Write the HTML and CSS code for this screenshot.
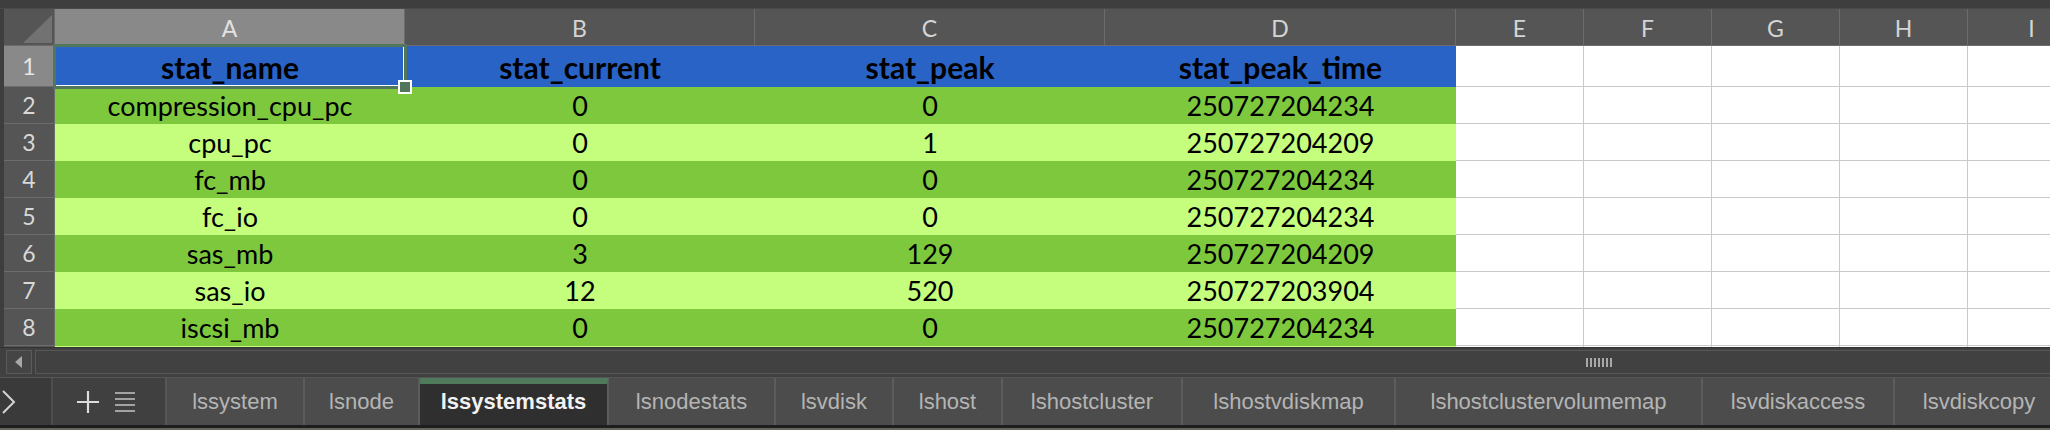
FILE: index.html
```html
<!DOCTYPE html>
<html>
<head>
<meta charset="utf-8">
<link rel="stylesheet" href="styles.css">
</head>
<body>
<div class="app">
  <div class="topbar"></div>
  <div class="sheet">
    <div class="corner"><svg width="51" height="36" viewBox="0 0 51 36"><polygon points="19,34 48,34 48,6" fill="#727272"/></svg></div>
    <div class="ch sel">A</div>
    <div class="ch">B</div>
    <div class="ch">C</div>
    <div class="ch">D</div>
    <div class="ch">E</div>
    <div class="ch">F</div>
    <div class="ch">G</div>
    <div class="ch">H</div>
    <div class="ch">I</div>

    <div class="rh sel">1</div>
    <div class="c hd">stat_name</div><div class="c hd">stat_current</div><div class="c hd">stat_peak</div><div class="c hd">stat_peak_time</div>
    <div class="w"></div><div class="w"></div><div class="w"></div><div class="w"></div><div class="w"></div>

    <div class="rh">2</div>
    <div class="c dk">compression_cpu_pc</div><div class="c dk">0</div><div class="c dk">0</div><div class="c dk">250727204234</div>
    <div class="w"></div><div class="w"></div><div class="w"></div><div class="w"></div><div class="w"></div>

    <div class="rh">3</div>
    <div class="c lt">cpu_pc</div><div class="c lt">0</div><div class="c lt">1</div><div class="c lt">250727204209</div>
    <div class="w"></div><div class="w"></div><div class="w"></div><div class="w"></div><div class="w"></div>

    <div class="rh">4</div>
    <div class="c dk">fc_mb</div><div class="c dk">0</div><div class="c dk">0</div><div class="c dk">250727204234</div>
    <div class="w"></div><div class="w"></div><div class="w"></div><div class="w"></div><div class="w"></div>

    <div class="rh">5</div>
    <div class="c lt">fc_io</div><div class="c lt">0</div><div class="c lt">0</div><div class="c lt">250727204234</div>
    <div class="w"></div><div class="w"></div><div class="w"></div><div class="w"></div><div class="w"></div>

    <div class="rh">6</div>
    <div class="c dk">sas_mb</div><div class="c dk">3</div><div class="c dk">129</div><div class="c dk">250727204209</div>
    <div class="w"></div><div class="w"></div><div class="w"></div><div class="w"></div><div class="w"></div>

    <div class="rh">7</div>
    <div class="c lt">sas_io</div><div class="c lt">12</div><div class="c lt">520</div><div class="c lt">250727203904</div>
    <div class="w"></div><div class="w"></div><div class="w"></div><div class="w"></div><div class="w"></div>

    <div class="rh">8</div>
    <div class="c dk">iscsi_mb</div><div class="c dk">0</div><div class="c dk">0</div><div class="c dk">250727204234</div>
    <div class="w"></div><div class="w"></div><div class="w"></div><div class="w"></div><div class="w"></div>

    <div class="rh"></div>
    <div class="c lt"></div><div class="c lt"></div><div class="c lt"></div><div class="c lt"></div>
    <div class="w"></div><div class="w"></div><div class="w"></div><div class="w"></div><div class="w"></div>

    <div class="selbox"><div class="handle"></div></div>
  </div>

  <div class="hscroll">
    <div class="sbtn"><svg width="10" height="14" viewBox="0 0 10 14"><polygon points="8,1 8,13 1,7" fill="#a8a8a8"/></svg></div>
    <div class="track"><div class="grip"><i></i><i></i><i></i><i></i><i></i><i></i><i></i></div></div>
  </div>

  <div class="tabbar">
    <div class="nav"><svg width="16" height="26" viewBox="0 0 16 26"><polyline points="2,2 13,13 2,24" fill="none" stroke="#d4d4d4" stroke-width="2"/></svg></div>
    <div class="tools">
      <svg width="24" height="24" viewBox="0 0 24 24"><path d="M12 1V23M1 12H23" stroke="#dcdcdc" stroke-width="2.2" fill="none"/></svg>
      <svg width="22" height="22" viewBox="0 0 22 22"><path d="M1 2H21M1 8H21M1 14H21M1 20H21" stroke="#c4c4c4" stroke-width="1.6" fill="none"/></svg>
    </div>
    <div class="tab t-system">lssystem</div>
    <div class="tab t-node">lsnode</div>
    <div class="tab active t-sysstats">lssystemstats</div>
    <div class="tab t-nodestats">lsnodestats</div>
    <div class="tab t-vdisk">lsvdisk</div>
    <div class="tab t-host">lshost</div>
    <div class="tab t-hostcluster">lshostcluster</div>
    <div class="tab t-hostvdiskmap">lshostvdiskmap</div>
    <div class="tab t-hcvm">lshostclustervolumemap</div>
    <div class="tab t-vdiskaccess">lsvdiskaccess</div>
    <div class="tab t-vdiskcopy">lsvdiskcopy</div>
  </div>
  <div class="bottom"></div>
</div>
</body>
</html>
```

FILE: styles.css
```css
* { box-sizing: border-box; }
html, body { margin: 0; padding: 0; background: #404040; }
body { width: 2050px; height: 430px; overflow: hidden; }
.app { display: flex; flex-direction: column; width: 2050px; height: 430px; }

.topbar { height: 9px; background: #3e3e3e; border-bottom: 1px solid #4a4a4a; flex: none; }

.sheet {
  position: relative;
  flex: none;
  height: 338px;
  overflow: hidden;
  display: grid;
  grid-template-columns: 51px 350px 350px 350px 351px 128px 128px 128px 128px 128px;
  grid-template-rows: 37px 41px repeat(8, 37px);
  padding-left: 4px;
  background: #3e3e3e;
  font-family: Lato, "Liberation Sans", sans-serif;
}

.corner { background: #555555; border-right: 1px solid #6a6a6a; border-bottom: 1px solid #6a6a6a; }
.corner svg { display: block; }

.ch {
  background: #555555;
  color: #d4d4d4;
  font-size: 23px;
  display: flex; align-items: center; justify-content: center;
  border-right: 1px solid #6c6c6c;
  border-bottom: 1px solid #6c6c6c;
  padding-top: 2px;
}
.ch.sel { background: #898989; color: #e2e2e2; }

.rh {
  background: #555555;
  color: #d8d8d8;
  font-size: 23px;
  display: flex; align-items: center; justify-content: center;
  border-bottom: 1px solid #6c6c6c;
  border-right: 1px solid #6c6c6c;
}
.rh.sel { background: #898989; color: #e6e6e6; }

.c {
  display: flex; align-items: center; justify-content: center;
  color: #000;
  font-size: 27px;
  white-space: nowrap;
}
.hd { background: #2a63c6; font-weight: 700; font-size: 30px; }
.dk { background: #7ec83e; }
.lt { background: #c5fd7d; }

.w { background: #ffffff; border-right: 1px solid #c9c9c9; border-bottom: 1px solid #c9c9c9; }

.selbox {
  position: absolute;
  left: 53px; top: 35px;
  width: 354px; height: 45px;
  border: 3px solid #52765b;
  box-shadow: inset -1px -1px 0 #ffffff;
  pointer-events: none;
}
.handle {
  position: absolute;
  right: -8px; bottom: -8px;
  width: 14px; height: 14px;
  background: #52765b;
  border: 2px solid #ffffff;
}

.hscroll {
  flex: none;
  height: 30px;
  background: #404040;
  border-top: 1px solid #333;
  display: flex;
  align-items: flex-start;
  padding: 2px 0 0 6px;
  gap: 3px;
}
.sbtn {
  width: 26px; height: 24px;
  border: 1px solid #5a5a5a;
  background: #454545;
  display: flex; align-items: center; justify-content: center;
}
.track {
  flex: 1;
  height: 24px;
  border: 1px solid #585858;
  border-right: none;
  background: #414141;
  display: flex; align-items: center; justify-content: center;
  padding-left: 1112px;
}
.grip { display: flex; gap: 2px; height: 9px; }
.grip i { display: block; width: 2px; height: 9px; background: #a8a8a8; }

.tabbar {
  flex: none;
  height: 48px;
  display: flex;
  background: #444;
  border-top: 1px solid #555;
  font-family: "Liberation Sans", Arial, sans-serif;
  font-size: 22px;
  overflow: hidden;
}
.nav {
  width: 53px; flex: none;
  background: #3a3a3a;
  border-right: 2px solid #4e4e4e;
  display: flex; align-items: center; padding-left: 1px;
}
.tools {
  width: 114px; flex: none;
  background: #404040;
  border-right: 2px solid #575757;
  display: flex; align-items: center; justify-content: center; gap: 14px;
  padding-right: 6px;
}
.tools svg { display: block; }
.tab {
  flex: none;
  background: #4c4c4c;
  color: #b4b4b4;
  border-right: 2px solid #5c5c5c;
  display: flex; align-items: center; justify-content: center;
  white-space: nowrap;
}
.tab.active {
  background: #2f2f2f;
  color: #f2f2f2;
  font-weight: 700;
  border-top: 6px solid #4f7a5c;
  padding-bottom: 6px;
}
.t-system { width: 138px; }
.t-node { width: 115px; }
.t-sysstats { width: 189px; }
.t-nodestats { width: 167px; }
.t-vdisk { width: 118px; }
.t-host { width: 109px; }
.t-hostcluster { width: 180px; }
.t-hostvdiskmap { width: 213px; }
.t-hcvm { width: 307px; }
.t-vdiskaccess { width: 192px; }
.t-vdiskcopy { width: 170px; }
.bottom { flex: none; height: 5px; background: #1e1e1e; border-bottom: 2px solid #66665e; }
```
